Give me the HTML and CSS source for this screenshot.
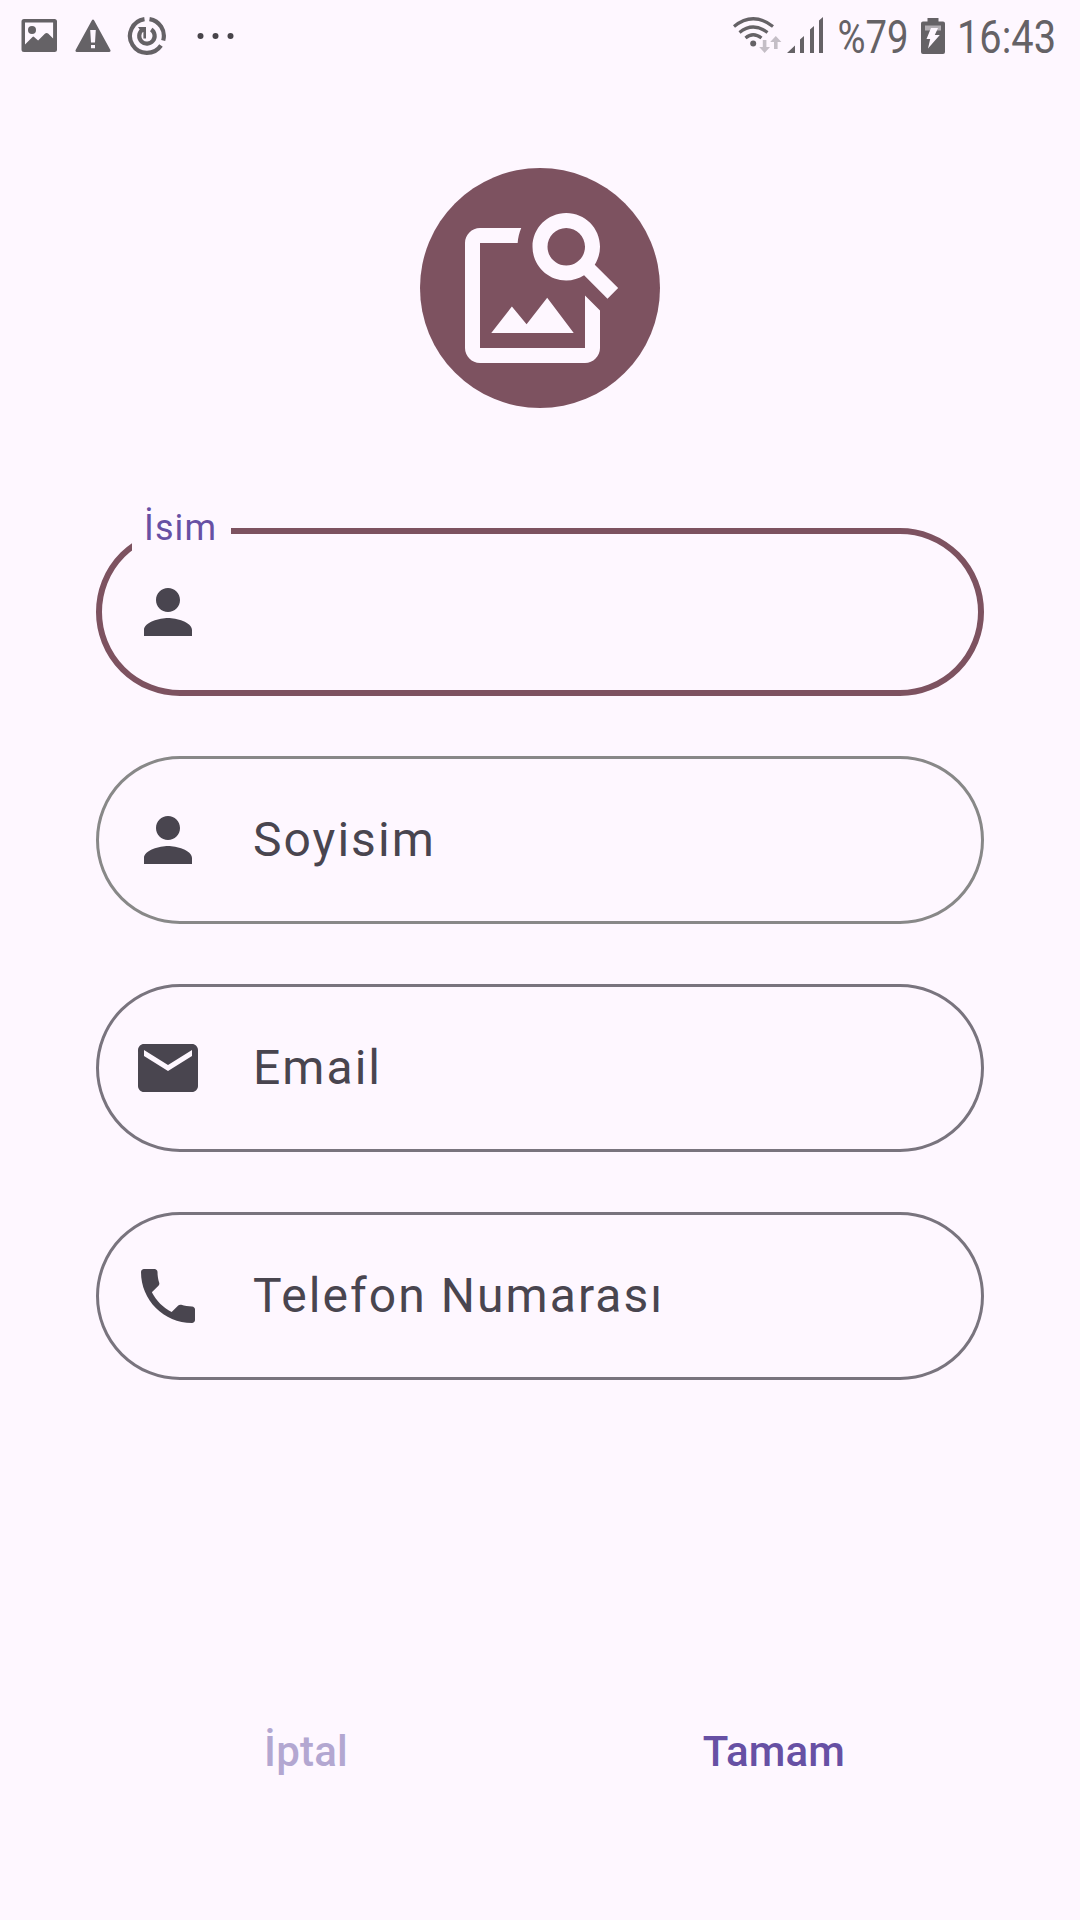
FILE: index.html
```html
<!DOCTYPE html>
<html lang="tr">
<head>
<meta charset="utf-8">
<title>Kişi Ekle</title>
<link rel="stylesheet" href="styles.css">
</head>
<body>
<div class="screen">
  <header class="status">
    <div class="status-group left">
      <svg width="36" height="72" viewBox="21 0 36 72"><path fill-rule="evenodd" d="M24 19h30.500q2.500 0 2.500 2.500v28q0 2.500-2.500 2.500H24q-2.500 0-2.500-2.500v-28Q21.500 19 24 19zM25 22.500V44.500l7.500-7.500q.8-.8 1.600 0l4 3.500 7-7q1.500-1.200 3 0l5 5V22.500z"/><circle cx="32" cy="30" r="4"/></svg>
      <svg width="36" height="72" viewBox="75 0 36 72"><path fill-rule="evenodd" d="M91.800 20.500q1.200-1.800 2.400 0l16.200 29.500q.6 2-1.400 2H77q-2 0-1.400-2zM90.200 30l.8 12.500h4l.8-12.500zM91 45v3.200h4V45z"/></svg>
      <svg width="40" height="72" viewBox="127 0 40 72"><g class="line"><path stroke-width="4.200" d="M149.500 19.100A17 17 0 0 1 163.200 40.500M161 45.500A17 17 0 1 1 144.500 19.100"/><path stroke-width="4.200" d="M151.200 29.500A7.700 7.700 0 1 1 142 30"/></g><path d="M138 27h8v11.500h-2.600v-6.500h-1.900z"/></svg>
      <svg width="37" height="72" viewBox="197 0 37 72" class="dark"><circle cx="200.500" cy="36" r="3"/><circle cx="215.500" cy="36" r="3"/><circle cx="230.500" cy="36" r="3"/></svg>
    </div>
    <div class="status-group right">
      <svg width="50" height="72" viewBox="732 0 50 72"><g class="line" stroke-width="3.200"><path d="M734 26.500Q753 11 773 26.500"/><path d="M739.500 32.500Q753 21.500 767.500 32.500"/><path d="M745.500 38Q753 31.500 761.500 38"/></g><circle cx="753.200" cy="43.500" r="3"/><path class="faint" d="M762.800 40h3.600v7h3.600l-5.400 6-5.400-6h3.600zM774 49h3.600v-7h3.800l-5.600-6-5.600 6h3.800z"/></svg>
      <svg width="36" height="72" viewBox="787 0 36 72"><path d="M787 53l8-7.500V53zM800 53V39.500l4-3.500v17zM810 53V29.500l4-3.500v27zM819 53V20.500l4-3.500v36z"/></svg>
      <svg width="77" height="72" viewBox="834 0 77 72"><text class="status-text" x="837.500" y="53" textLength="71" lengthAdjust="spacingAndGlyphs">%79</text></svg>
      <svg width="24" height="72" viewBox="921 0 24 72"><path d="M927.500 18h11v3.500h4.500q2 0 2 2V52q0 2-2 2h-20q-2 0-2-2V23.500q0-2 2-2h4.500z"/><path class="battery-empty" d="M925 25.500h16v5h-16z"/><path class="bolt" d="M931 28h7l-3.200 7h5l-11.800 13.500 2.200-9.500h-3.700z"/></svg>
      <svg width="106" height="72" viewBox="953 0 106 72"><text class="status-text" x="957" y="53" textLength="99" lengthAdjust="spacingAndGlyphs">16:43</text></svg>
    </div>
  </header>

  <div class="avatar">
    <svg width="180" height="180" viewBox="0 0 24 24"><path d="M18 13v7H4V6h5.020c.05-.71.22-1.380.48-2H4c-1.100 0-2 .9-2 2v14c0 1.100.9 2 2 2h14c1.100 0 2-.9 2-2v-5l-2-2zm-1.500 5h-11l2.750-3.530 1.960 2.360 2.750-3.540L16.500 18zm2.800-9.110c.44-.7.7-1.510.7-2.390C20 4.010 17.990 2 15.500 2S11 4.010 11 6.500s2.010 4.500 4.490 4.500c.88 0 1.700-.26 2.390-.7L21 13.420 22.420 12 19.300 8.890zM15.500 9C14.120 9 13 7.880 13 6.500S14.120 4 15.500 4 18 5.120 18 6.500 16.880 9 15.500 9z"/></svg>
  </div>

  <main class="form">
    <div class="field focused">
      <span class="floating">İsim</span>
      <svg class="icon" viewBox="0 0 24 24"><path d="M12 12c2.210 0 4-1.790 4-4s-1.790-4-4-4-4 1.790-4 4 1.790 4 4 4zm0 2c-2.670 0-8 1.340-8 4v2h16v-2c0-2.660-5.330-4-8-4z"/></svg>
    </div>
    <div class="field neutral">
      <svg class="icon" viewBox="0 0 24 24"><path d="M12 12c2.210 0 4-1.790 4-4s-1.790-4-4-4-4 1.790-4 4 1.790 4 4 4zm0 2c-2.670 0-8 1.340-8 4v2h16v-2c0-2.660-5.330-4-8-4z"/></svg>
      <span class="label">Soyisim</span>
    </div>
    <div class="field">
      <svg class="icon" viewBox="0 0 24 24"><path d="M20 4H4c-1.100 0-1.990.9-1.990 2L2 18c0 1.100.9 2 2 2h16c1.100 0 2-.9 2-2V6c0-1.100-.9-2-2-2zm0 4l-8 5-8-5V6l8 5 8-5v2z"/></svg>
      <span class="label">Email</span>
    </div>
    <div class="field">
      <svg class="icon" viewBox="0 0 24 24"><path d="M20 15.500c-1.250 0-2.450-.2-3.570-.57-.1-.03-.21-.05-.31-.05-.26 0-.51.1-.71.290l-2.200 2.200c-2.830-1.440-5.150-3.750-6.590-6.590l2.200-2.210c.28-.26.36-.65.25-1C8.700 6.450 8.500 5.250 8.500 4c0-.55-.45-1-1-1H4c-.55 0-1 .45-1 1 0 9.390 7.610 17 17 17 .55 0 1-.45 1-1v-3.500c0-.55-.45-1-1-1z"/></svg>
      <span class="label">Telefon Numarası</span>
    </div>
  </main>

  <footer class="actions">
    <button class="action cancel">İptal</button>
    <button class="action">Tamam</button>
  </footer>
</div>
</body>
</html>
```
FILE: styles.css
```css
* { box-sizing: border-box; }
body { margin: 0; background: #fef7ff; font-family: Roboto, sans-serif; }
svg { display: block; flex: none; }
.screen { width: 1080px; height: 1920px; display: flex; flex-direction: column; overflow: hidden; }

.status { height: 72px; display: flex; justify-content: space-between; padding: 0 21px; fill: #656266; }
.status-group { display: flex; }
.left { gap: 18px; }
.left svg:nth-child(3) { margin-left: -2px; }
.left .dark { margin-left: 12px; fill: #48444a; }
.right svg:nth-child(2) { margin-left: 5px; }
.right svg:nth-child(3) { margin-left: 11px; }
.right svg:nth-child(4) { margin-left: 10px; }
.right svg:nth-child(5) { margin-left: 8px; }
.line { fill: none; stroke: #656266; }
.faint { fill: #c4bec6; }
.battery-empty { fill: #b2adb3; }
.bolt { fill: #fef7ff; }
.status-text { font-size: 46px; }

.avatar { width: 240px; height: 240px; margin: 96px auto 0; border-radius: 50%; background: #7d5260; display: grid; place-items: center; fill: #fef7ff; }

.form { margin: 120px 96px 0; display: flex; flex-direction: column; gap: 60px; }
.field { position: relative; height: 168px; border: 3px solid #79747e; border-radius: 84px; display: flex; align-items: center; padding-left: 33px; }
.field.neutral { border-color: #888888; }
.field.focused { border: 6px solid #7d5260; padding-left: 30px; }
.icon { width: 72px; height: 72px; fill: #49454f; }
.label { margin-left: 49px; font-size: 48px; line-height: 56px; letter-spacing: 2.05px; color: #49454f; }
.floating { position: absolute; left: 30px; top: -27px; width: 99px; height: 50px; padding-left: 12px; background: #fef7ff; color: #6750a4; font-size: 36px; line-height: 42px; letter-spacing: 1.1px; }

.actions { display: flex; margin: 299px 72px 0; }
.action { flex: 1; height: 144px; border: 0; padding: 0; background: none; font: 500 42px Roboto, sans-serif; letter-spacing: 0.200px; color: #6750a4; }
.cancel { color: #b3a7d1; }
```
